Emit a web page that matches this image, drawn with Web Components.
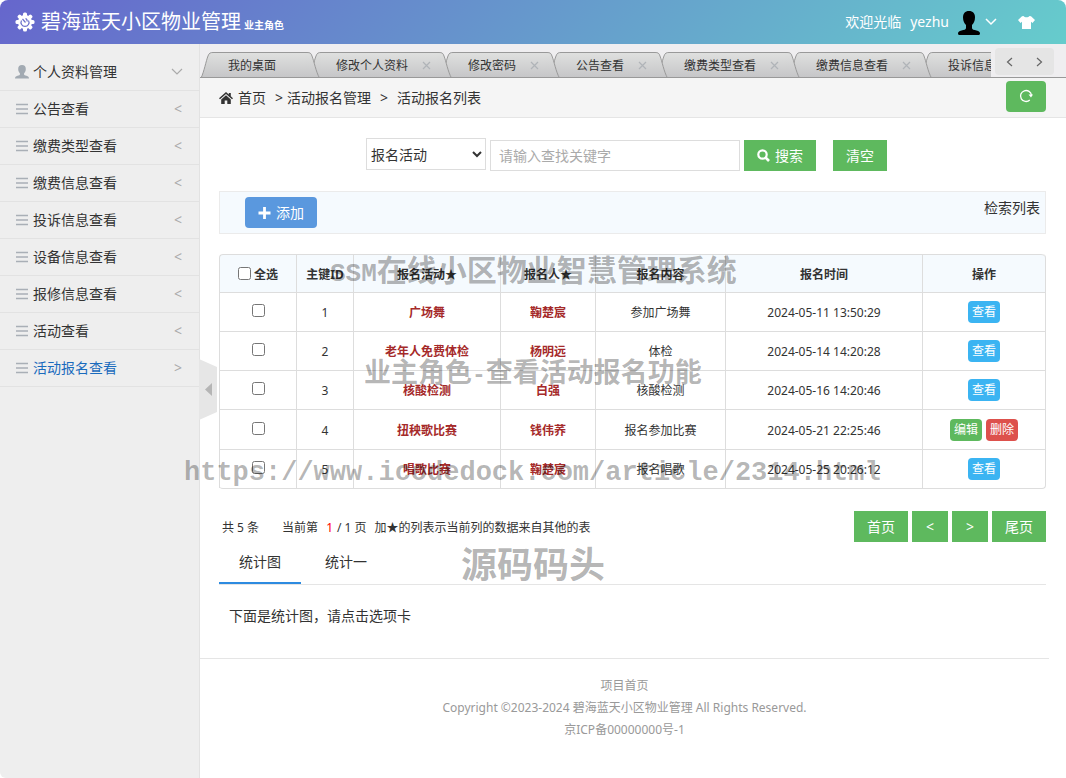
<!DOCTYPE html>
<html lang="zh-CN">
<head>
<meta charset="utf-8">
<title>碧海蓝天小区物业管理</title>
<style>
html,body{margin:0;min-height:100%}
body{font:14px/20px "Noto Sans","Noto Sans CJK SC",sans-serif;color:#333;background:#fff}
</style>
</head>
<body>
<estate-app></estate-app>
<script>
const reset = `*{box-sizing:border-box}a{color:inherit;text-decoration:none}button,input,select{font:inherit;color:inherit;margin:0}svg{display:block;flex:none}button{border:0;padding:0;cursor:pointer}`;
function component(name, css, html, setup) {
  customElements.define(name, class extends HTMLElement {
    connectedCallback() {
      if (this.shadowRoot) return;
      const root = this.attachShadow({mode: 'open'});
      root.innerHTML = `<style>${reset}${css}</style>${typeof html === 'function' ? html(this) : html}`;
      if (setup) setup(this, root);
    }
  });
}

component('app-header', `
:host{display:flex;align-items:center;height:44px;padding:0 31px 0 15px;color:#fff;background:linear-gradient(135deg,#66c,#6cc);border-radius:8px 8px 0 0}
h1{display:flex;align-items:baseline;margin:3px 0 0 6px;font-size:20px;line-height:28px;font-weight:400;flex:1;white-space:nowrap}
h1 small{font-size:10px;font-weight:700;margin-left:3px}
.user{display:flex;align-items:center;height:44px}
.user span{margin-right:9px}
.avatar{margin:2px 4px 0 -1px}
.skin{margin-left:21px;background:none}`, `
<svg width="20" height="20" viewBox="0 0 20 20"><g fill="#fff"><circle cx="10" cy="10" r="7"/><rect x="8" y=".5" width="4" height="19" rx="1.500"/><rect x=".5" y="8" width="19" height="4" rx="1.500"/><g transform="rotate(45 10 10)"><rect x="8" y=".5" width="4" height="19" rx="1.500"/><rect x=".5" y="8" width="19" height="4" rx="1.500"/></g></g><path d="M6.500 8.500a4 4 0 1 0 7 0M7.500 7l3 3.500M10.500 6.500a2.500 2.500 0 0 1 1.500 3" fill="none" stroke="#6a70cb" stroke-width="1.200"/></svg>
<h1><slot></slot><small><slot name="role"></slot></small></h1>
<a class="user" href="#user"><span>欢迎光临</span><span>yezhu</span>
<svg class="avatar" width="24" height="24" viewBox="0 0 24 24"><path d="M12 0c4 0 6 2.500 6 6.500 0 3.500-1.500 6-3 7.500v3c0 1.500 2 2 4.500 2.500 2.500.5 3.500 1.500 3.500 3 0 1-.8 1.500-2 1.500H3c-1.200 0-2-.5-2-1.500 0-1.500 1-2.500 3.500-3C7 19 9 18.500 9 17v-3c-1.500-1.500-3-4-3-7.500C6 2.500 8 0 12 0z" fill="#000"/></svg>
<svg width="12" height="8" viewBox="0 0 12 8"><path d="M1 1l5 5 5-5" fill="none" stroke="#fff" stroke-width="1.500"/></svg></a>
<button class="skin" type="button" aria-label="换肤"><svg width="17" height="13" viewBox="0 0 17 13"><path d="M5.500 0c1 1.800 5 1.800 6 0L13 .3l4 3.700-2.500 3L13 5.800V13H4V5.800L2.500 7 0 4 4 .3z" fill="#fff"/></svg></button>`);

component('nav-item', `
:host{display:block;border-bottom:1px solid #e2e2e2}
a{display:flex;align-items:center;height:36px;padding:0 16px 0 15px;color:#333}
:host([active]) a{color:#1a6bbd}
span{flex:1;margin-left:4px}
b{width:9px;font-weight:400;color:#aaa}`, el => `<a href="#menu">${el.getAttribute('icon') === 'user'
 ? `<svg width="14" height="14" viewBox="0 0 14 14"><path d="M7 0c2.600 0 3.800 1.600 3.800 4 0 2-.8 3.500-1.700 4.300v1.200c0 .6 1 .8 2.400 1.200 1.700.5 2.500 1 2.500 2.800H0c0-1.800.8-2.300 2.500-2.800 1.400-.4 2.400-.6 2.400-1.200V8.300C4 7.500 3.200 6 3.200 4 3.200 1.600 4.400 0 7 0z" fill="#a2aab2"/></svg>`
 : `<svg width="14" height="12" viewBox="0 0 14 12"><path d="M1 1.500h12M1 6h12M1 10.500h12" stroke="#a9afb6" stroke-width="1.500"/></svg>`}
<span><slot></slot></span>${el.hasAttribute('open')
 ? '<svg width="12" height="8" viewBox="0 0 12 8"><path d="M1 1l5 5 5-5" fill="none" stroke="#aaa" stroke-width="1.200"/></svg>'
 : `<b>${el.hasAttribute('active') ? '&gt;' : '&lt;'}</b>`}</a>`);

component('side-nav', `
:host{display:block;position:relative;background:#eee;border-right:1px solid #e2e2e2;padding-top:10px;border-radius:0 0 0 6px}
.fold{position:absolute;left:100%;top:calc(50% - 52px);width:18px;height:62px;background:none}`, `
<nav><slot></slot></nav>
<button class="fold" type="button" aria-label="收起菜单"><svg width="18" height="62" viewBox="0 0 18 62"><path d="M0 0l18 8v45L0 61z" fill="#e6e6e6"/><path d="M13 24v13l-7-6.500z" fill="#b5b5b5"/></svg></button>`);

component('page-tab', `
:host{display:flex;flex:none;margin-right:-12px;height:26px;font-size:12px}
.mid{display:flex;align-items:center;height:26px;padding:0 6px 0 15px;white-space:nowrap;border-top:1px solid #999;background:linear-gradient(#dfe0df,#c5c5c7)}
.close{width:9px;margin:0 0 0 14px;background:none}
.none{width:23px}`, el => `
<svg width="12" height="26" viewBox="0 0 12 26"><defs><linearGradient id="g" x2="0" y2="1"><stop stop-color="#dfe0df"/><stop offset="1" stop-color="#c5c5c7"/></linearGradient></defs><path d="M0 26C3 20 5 9 7 4 8 1 9.500.5 12 .5V26z" fill="url(#g)"/><path d="M0 26C3 20 5 9 7 4 8 1 9.500.5 12 .5" fill="none" stroke="#999"/></svg>
<div class="mid"><a href="#tab"><slot></slot></a>${el.hasAttribute('fixed') ? '<span class="none"></span>' : '<button class="close" type="button" aria-label="关闭"><svg width="9" height="9" viewBox="0 0 9 9"><path d="M1 1l7 7M8 1L1 8" stroke="#b0b4b8" stroke-width="1.200"/></svg></button>'}</div>
<svg width="16" height="26" viewBox="0 0 16 26"><defs><linearGradient id="g" x2="0" y2="1"><stop stop-color="#dfe0df"/><stop offset="1" stop-color="#c5c5c7"/></linearGradient></defs><path d="M0 .5h2C5 .5 6 1 7 4c2 5 4 16 7.500 22H0z" fill="url(#g)"/><path d="M0 .5h2C5 .5 6 1 7 4c2 5 4 16 7.500 22" fill="none" stroke="#999"/></svg>`);

component('page-tabs', `
:host{display:flex;height:34px;background:#efeef0;border-bottom:1px solid #999;padding-right:12px}
.strip{flex:1;min-width:0;display:flex;overflow:hidden;padding:8px 0 0 1px}
.ctl{display:flex;margin:4px 0 0 4px;width:59px;height:27px;background:#e5e5e5;border-radius:4px}
.ctl button{flex:1;display:flex;align-items:center;justify-content:center;background:none}`, `
<div class="strip"><slot></slot></div>
<div class="ctl"><button type="button" aria-label="向左"><svg width="7" height="10" viewBox="0 0 7 10"><path d="M6 1L1.500 5 6 9" fill="none" stroke="#666" stroke-width="1.200"/></svg></button><button type="button" aria-label="向右"><svg width="7" height="10" viewBox="0 0 7 10"><path d="M1 1l4.500 4L1 9" fill="none" stroke="#666" stroke-width="1.200"/></svg></button></div>`,
el => [...el.children].forEach((t, i) => t.style.zIndex = 20 - i));

component('crumb-bar', `
:host{display:flex;align-items:center;height:40px;padding:0 20px 3px 19px;background:#f5f5f5;border-bottom:1px solid #e5e5e5}
nav{flex:1;display:flex;align-items:center;padding-top:4px}
nav a{margin-left:5px}
nav b{font-weight:400;margin:0 4px 0 9px}
nav b+a{margin-left:0}
nav b:last-of-type{margin-right:9px}
button{display:flex;align-items:center;justify-content:center;width:40px;height:31px;border-radius:4px;background:#5eb95e}`, `
<nav><svg width="14" height="12" viewBox="0 0 14 12"><path d="M7 0l2.800 2.400V1h2v3.200L14 6.200l-1 1.100-6-5.200-6 5.200-1-1.100z" fill="#333"/><path d="M7 3.200l4.800 4.200V12H8.300V8.500H5.700V12H2.200V7.400z" fill="#333"/></svg>
<a href="#home">首页</a><b>&gt;</b><a href="#manage">活动报名管理</a><b>&gt;</b><a href="#list">活动报名列表</a></nav>
<button type="button" aria-label="刷新"><svg width="14" height="14" viewBox="0 0 14 14"><path d="M10.800 11A5.500 5.500 0 1 1 12.500 6.500" fill="none" stroke="#fff" stroke-width="1.300"/><path d="M9.500 5.500h4.500L12 8.500z" fill="#fff"/></svg></button>`);

component('search-bar', `
:host{display:block}
form{display:flex;justify-content:center;padding-right:12px}
select{width:120px;height:32px;border:1px solid #ddd;background:#fff;padding:0}
input{width:250px;height:31px;margin:2px 4px 0;padding:0 8px;border:1px solid #ddd;background:#fff;outline:0}
input::placeholder{color:#aaa}
button{display:flex;align-items:center;height:31px;margin-top:2px;padding:0 13px;background:#5eb95e;color:#fff}
button svg{margin-right:5px}
button+button{margin-left:17px}`, `
<form onsubmit="return false"><select aria-label="查找字段"><option>报名活动</option><option>报名人</option><option>报名内容</option></select>
<input type="text" aria-label="查找关键字" placeholder="请输入查找关键字">
<button type="submit"><svg width="13" height="13" viewBox="0 0 13 13"><circle cx="5.500" cy="5.500" r="4.200" fill="none" stroke="#fff" stroke-width="2.200"/><path d="M8.500 8.500l3.500 3.500" stroke="#fff" stroke-width="2.600"/></svg>搜索</button><button type="reset">清空</button></form>`);

component('tool-strip', `
:host{display:flex;justify-content:space-between;height:43px;margin-top:20px;padding:5px 5px 0 25px;background:#f5fafe;border:1px solid #ebebeb}
button{display:flex;align-items:center;height:31px;padding:0 13px;border-radius:4px;background:#5a98de;color:#fff}
svg{margin-right:5px}
span{margin-top:1px}`, `
<button type="button"><svg width="13" height="12" viewBox="0 0 13 12"><path d="M6.500 0v12M.5 6h12" stroke="#fff" stroke-width="2.800"/></svg><slot></slot></button><span><slot name="title"></slot></span>`);

const rows = [
 ['1','广场舞','鞠楚宸','参加广场舞','2024-05-11 13:50:29'],
 ['2','老年人免费体检','杨明远','体检','2024-05-14 14:20:28'],
 ['3','核酸检测','白强','核酸检测','2024-05-16 14:20:46'],
 ['4','扭秧歌比赛','钱伟荞','报名参加比赛','2024-05-21 22:25:46', 1],
 ['5','唱歌比赛','鞠楚宸','报名唱歌','2024-05-25 20:26:12']];
component('signup-table', `
:host{display:block;margin-top:20px}
table{width:100%;table-layout:fixed;border-collapse:separate;border-spacing:0;font-size:12px;text-align:center;border:1px solid #ddd;border-left:0;border-top:0;border-radius:4px}
th,td{padding:2px 0 0;height:39px;border-left:1px solid #ddd;border-top:1px solid #ddd;vertical-align:middle}
th{height:38px;background:#f5fafe;font-weight:700}
td:last-child{padding:0}
th:first-child{border-top-left-radius:4px}
th:last-child{border-top-right-radius:4px}
input{display:inline-block;width:13px;height:13px}
th input{vertical-align:-1px;margin-right:3px}
td input{vertical-align:0}
.two td{height:40px}
.from{color:#a52a2a;font-weight:700}
button{width:32px;height:22px;border-radius:4px;background:#3bb4f2;color:#fff;vertical-align:middle}
.edit{background:#5eb95e;margin-right:4px}.del{background:#dd514c}`, `
<table><colgroup><col style="width:77px"><col style="width:57px"><col style="width:147px"><col style="width:95px"><col style="width:130px"><col><col style="width:123px"></colgroup>
<thead><tr><th><label><input type="checkbox">全选</label></th><th>主键ID</th><th>报名活动★</th><th>报名人★</th><th>报名内容</th><th>报名时间</th><th>操作</th></tr></thead>
<tbody>${rows.map(r => `<tr${r[5] ? ' class="two"' : ''}><td><input type="checkbox" aria-label="选择 ${r[0]}"></td><td>${r[0]}</td><td class="from">${r[1]}</td><td class="from">${r[2]}</td><td>${r[3]}</td><td>${r[4]}</td><td>${r[5] ? '<button type="button" class="edit">编辑</button><button type="button" class="del">删除</button>' : '<button type="button">查看</button>'}</td></tr>`).join('')}</tbody></table>`);

component('list-pager', `
:host{display:flex;align-items:center;margin-top:22px;padding-left:3px;font-size:12px}
.info{flex:1;display:flex;padding-top:2px;white-space:nowrap}
.info span:first-child{margin-right:23px}
.info span:last-child{margin-left:8px}
em{font-style:normal;color:#f00;margin:0 4px 0 8px}
.go{display:flex;gap:4px;font-size:14px}
.go a{height:31px;line-height:31px;width:36px;text-align:center;background:#5eb95e;color:#fff}
.go .wide{width:54px}`, `
<div class="info"><span>共 5 条</span><span>当前第<em>1</em>/ 1 页</span><span>加★的列表示当前列的数据来自其他的表</span></div>
<nav class="go"><a class="wide" href="#first">首页</a><a href="#prev">&lt;</a><a href="#next">&gt;</a><a class="wide" href="#last">尾页</a></nav>`);

component('stat-tabs', `
:host{display:block}
.bar{display:flex;gap:4px;height:43px;border-bottom:1px solid #e5e5e5}
button{height:42px;padding:0 20px;background:none;border-bottom:2px solid transparent}
button.on{border-color:#2d8be0}
p{margin:21px 10px 0}`, `
<div class="bar" role="tablist"><button type="button" role="tab" class="on">统计图</button><button type="button" role="tab">统计一</button></div>
<p><slot></slot></p>`);

component('page-footer', `
:host{display:block;margin:32px 17px 0 0;padding-top:16px;border-top:1px solid #e5e5e5;font-size:12px;line-height:22px;color:#999;text-align:center}
p{margin:0}`, `<p><a href="#home">项目首页</a></p><p>Copyright ©2023-2024 碧海蓝天小区物业管理 All Rights Reserved.</p><p>京ICP备00000000号-1</p>`);

component('water-mark', `
:host{position:absolute;white-space:nowrap;font-family:"Liberation Mono","Noto Sans CJK SC",monospace;font-weight:700;line-height:40px;color:rgba(0,0,0,.3);pointer-events:none;z-index:30}
i{font-style:normal;font-size:var(--latin,1em)}`, el => `<i>${el.getAttribute('latin') || ''}</i><slot></slot>`);

component('estate-app', `
:host{display:grid;grid-template-rows:auto 1fr;min-height:100vh;position:relative;overflow:hidden}
.body{display:grid;grid-template-columns:200px minmax(0,1fr)}
main{min-width:0}
.content{padding:20px 20px 0 19px}
.w1{left:330px;top:253px;font-size:30px;--latin:26px}
.w2{left:364px;top:355px;font-size:27px}
.w2 i{font-style:normal;font-size:23px}
.w3{left:184px;top:453px;--latin:27px}
.w4{left:461px;top:549px;font-size:36px}`, `
<app-header>碧海蓝天小区物业管理<span slot="role">业主角色</span></app-header>
<div class="body"><side-nav>
<nav-item icon="user" open>个人资料管理</nav-item><nav-item>公告查看</nav-item><nav-item>缴费类型查看</nav-item><nav-item>缴费信息查看</nav-item><nav-item>投诉信息查看</nav-item><nav-item>设备信息查看</nav-item><nav-item>报修信息查看</nav-item><nav-item>活动查看</nav-item><nav-item active>活动报名查看</nav-item>
</side-nav><main>
<page-tabs><page-tab fixed>我的桌面</page-tab><page-tab>修改个人资料</page-tab><page-tab>修改密码</page-tab><page-tab>公告查看</page-tab><page-tab>缴费类型查看</page-tab><page-tab>缴费信息查看</page-tab><page-tab>投诉信息查看</page-tab></page-tabs>
<crumb-bar></crumb-bar>
<div class="content"><search-bar></search-bar><tool-strip>添加<span slot="title">检索列表</span></tool-strip><signup-table></signup-table><list-pager></list-pager><stat-tabs>下面是统计图，请点击选项卡</stat-tabs></div>
<page-footer></page-footer></main></div>
<water-mark class="w1" latin="SSM">在线小区物业智慧管理系统</water-mark>
<water-mark class="w2">业主角色<i>-</i>查看活动报名功能</water-mark>
<water-mark class="w3" latin="https://www.icodedock.com/article/2314.html"></water-mark>
<water-mark class="w4">源码码头</water-mark>`);
</script>
</body>
</html>
